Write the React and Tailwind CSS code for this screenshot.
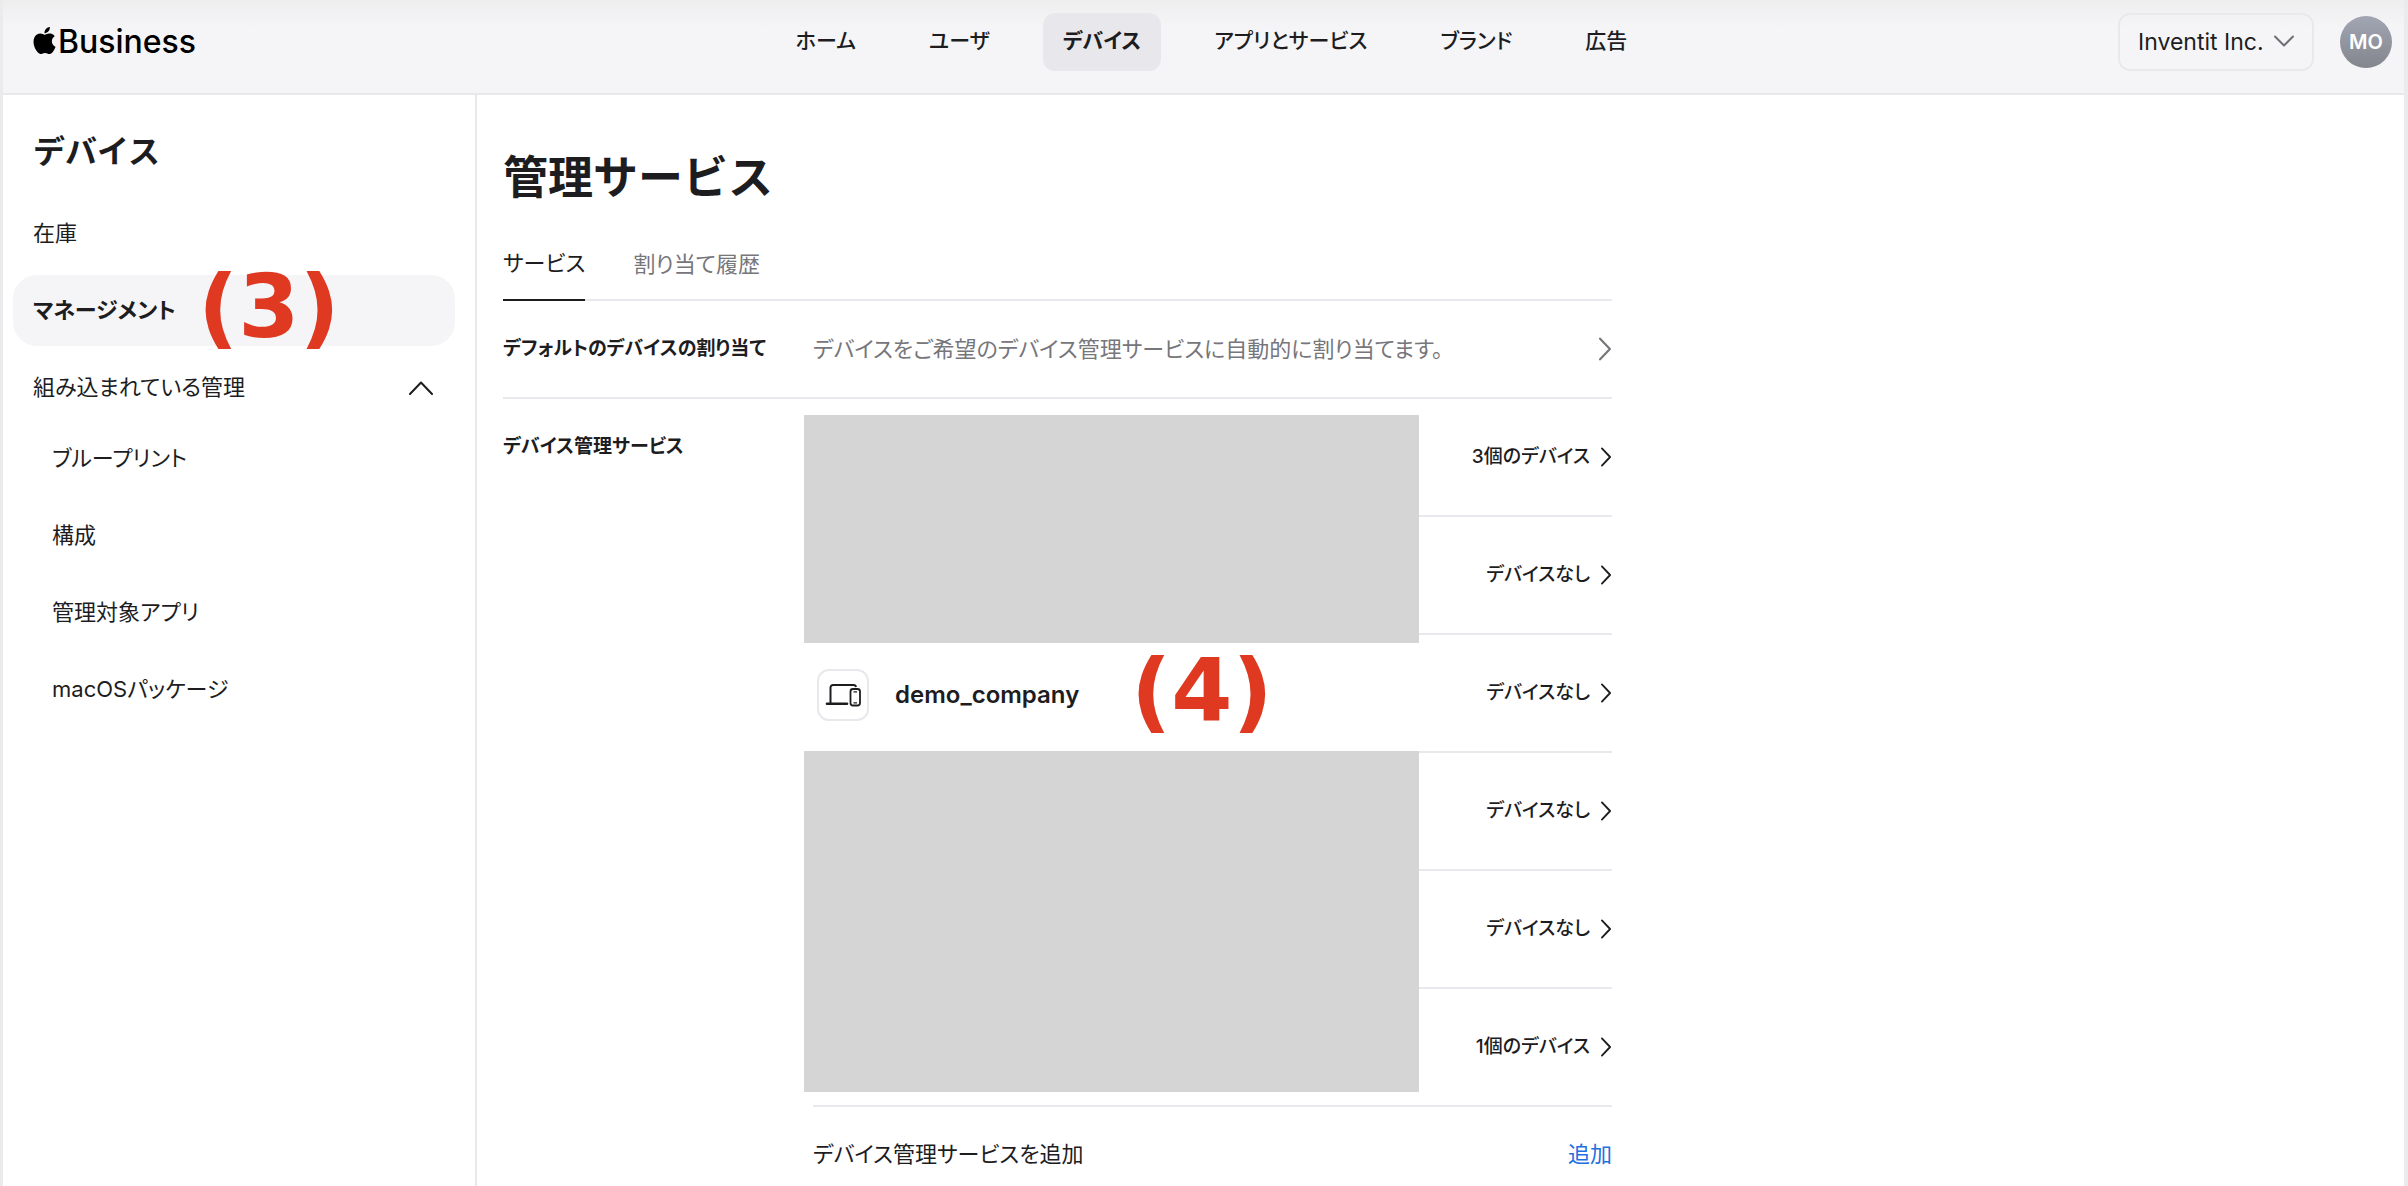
import React from "react";
import { SiApple } from "react-icons/si";
import clsx from "clsx";

const NAV_ITEMS = [
  { id: "home", label: "ホーム" },
  { id: "users", label: "ユーザ" },
  { id: "devices", label: "デバイス", active: true },
  { id: "apps", label: "アプリとサービス" },
  { id: "brand", label: "ブランド" },
  { id: "ads", label: "広告" },
];

const BUILT_IN_ITEMS = [
  { id: "blueprints", label: "ブループリント" },
  { id: "configurations", label: "構成" },
  { id: "managed-apps", label: "管理対象アプリ" },
  { id: "packages", label: "macOSパッケージ" },
];

const SERVICES = [
  { id: 1, count: "3個のデバイス" },
  { id: 2, count: "デバイスなし" },
  { id: 3, name: "demo_company", count: "デバイスなし" },
  { id: 4, count: "デバイスなし" },
  { id: 5, count: "デバイスなし" },
  { id: 6, count: "1個のデバイス" },
];

function Chevron({ className, d = "M1.5 1.5 L10.5 11 L1.5 20.5", box = "0 0 12 22" }) {
  return (
    <svg viewBox={box} className={className} fill="none" aria-hidden="true">
      <path
        d={d}
        stroke="currentColor"
        strokeWidth="2"
        strokeLinecap="round"
        strokeLinejoin="round"
      />
    </svg>
  );
}

function DevicesIcon() {
  return (
    <svg viewBox="0 0 36 24" className="w-9 h-6" fill="none" stroke="currentColor" aria-hidden="true">
      <path d="M5.5 20V4.5a2.5 2.5 0 0 1 2.5-2.5H28.5a2.5 2.5 0 0 1 2.5 2" strokeWidth="2" />
      <path d="M2 20.8H22" strokeWidth="2.6" strokeLinecap="round" />
      <rect x="25.5" y="6" width="9.5" height="16.5" rx="2.5" strokeWidth="1.8" />
      <path d="M28.5 8.8h3.5M28.5 19.8h3.5" strokeWidth="1.2" />
    </svg>
  );
}

// Numbered step marker laid over the screen
function StepMark({ children, className }) {
  return (
    <span
      className={clsx(
        "absolute pointer-events-none font-['DejaVu_Sans',sans-serif] font-bold text-[88px] leading-none text-[#df3922]",
        className
      )}
    >
      {children}
    </span>
  );
}

function Header() {
  return (
    <header className="grid grid-cols-[1fr_auto_1fr] items-start h-[95px] pt-[13px] pl-7 pr-3 border-b-2 border-[#e8e8eb] bg-linear-to-b from-[#eeeeef] to-[#f5f5f7] to-30%">
      <a href="#" className="flex items-center h-[58px] text-black">
        <SiApple className="size-[27px] -mt-1" />
        <span className="text-[32px] font-medium leading-none">Business</span>
      </a>
      <nav className="flex gap-[33px]">
        {NAV_ITEMS.map((item) => (
          <a
            key={item.id}
            href={`#${item.id}`}
            className={clsx(
              "flex items-center h-[58px] px-5 pb-0.5 rounded-xl text-[21px]",
              item.active ? "bg-[#e8e8ec] font-bold" : "font-medium"
            )}
          >
            {item.label}
          </a>
        ))}
      </nav>
      <div className="flex items-center justify-end gap-[26px]">
        <div className="relative">
          <select
            aria-label="組織"
            className="appearance-none h-[58px] pl-[18px] pr-12 rounded-xl border-2 border-[#e9e9ec] text-[23px] bg-transparent"
          >
            <option>Inventit Inc.</option>
          </select>
          <Chevron
            box="0 0 20 12"
            d="M1 1.5 L10 10.5 L19 1.5"
            className="absolute right-5 top-[22px] w-5 h-3 text-[#6e6e73] pointer-events-none"
          />
        </div>
        <button
          type="button"
          className="size-[52px] rounded-full bg-linear-to-b from-[#a2a6b4] to-[#83868c] text-white text-xl font-semibold"
        >
          MO
        </button>
      </div>
    </header>
  );
}

function Sidebar() {
  return (
    <aside className="w-[474px] shrink-0 border-r-2 border-[#e8e8ed] pl-2.5 pr-5 pt-8 text-[22px]">
      <h2 className="px-5 h-[50px] flex items-center text-[32px] font-bold [font-feature-settings:normal]">
        デバイス
      </h2>
      <nav className="flex flex-col gap-1.5 mt-[21px]">
        <a href="#inventory" className="flex items-center h-[71px] px-5">
          在庫
        </a>
        <a
          href="#management"
          className="relative flex items-center h-[71px] px-5 rounded-3xl bg-[#f5f5f7] font-bold"
        >
          マネージメント
          <StepMark className="left-[185px] -top-3">(3)</StepMark>
        </a>
        <div>
          <button
            type="button"
            aria-expanded="true"
            className="flex items-center justify-between w-full h-[71px] pl-5 pr-[22px]"
          >
            組み込まれている管理
            <Chevron box="0 0 24 14" d="M1 13 L12 1.5 L23 13" className="w-6 h-3.5" />
          </button>
          <div className="flex flex-col gap-1.5">
            {BUILT_IN_ITEMS.map((item) => (
              <a key={item.id} href={`#${item.id}`} className="flex items-center h-[71px] pl-[39px]">
                {item.label}
              </a>
            ))}
          </div>
        </div>
      </nav>
    </aside>
  );
}

function ServiceRow({ service }) {
  return (
    <li className="flex items-center h-[118px] border-b-2 border-[#e8e8ed]">
      {service.name && (
        <div className="relative flex items-center ml-1 mt-1">
          <span className="grid place-items-center size-[52px] rounded-xl border-2 border-[#e8e8ed]">
            <DevicesIcon />
          </span>
          <span className="ml-[26px] text-[24px] font-semibold">{service.name}</span>
          <StepMark className="left-[314px] -top-[22px]">(4)</StepMark>
        </div>
      )}
      <button type="button" className="flex items-center gap-2.5 ml-auto text-[19px] font-medium">
        {service.count}
        <Chevron className="w-3 h-5" />
      </button>
    </li>
  );
}

export default function App() {
  return (
    <div className="min-h-screen flex flex-col bg-white text-[#1d1d1f] font-['Inter','Noto_Sans_CJK_JP',sans-serif] [font-feature-settings:'palt'] border-l-3 border-r-4 border-[#ebebed]">
      <Header />
      <div className="flex flex-1">
        <Sidebar />
        <main className="flex-1 pl-[26px] pt-[51px]">
          <div className="max-w-[1109px]">
            <h1 className="text-[45px] leading-[64px] font-bold [font-feature-settings:normal]">
              管理サービス
            </h1>
            <div role="tablist" className="flex gap-12 mt-[17px] text-[22px] border-b-2 border-[#e8e8ed]">
              <button
                type="button"
                role="tab"
                aria-selected="true"
                className="h-[74px] -mb-0.5 border-b-2 border-[#1d1d1f]"
              >
                サービス
              </button>
              <button type="button" role="tab" aria-selected="false" className="h-[74px] -mb-0.5 text-[#76767b]">
                割り当て履歴
              </button>
            </div>

            <section className="grid grid-cols-[310px_1fr] items-center h-[98px] border-b-2 border-[#e8e8ed]">
              <h3 className="text-[19px] font-bold">デフォルトのデバイスの割り当て</h3>
              <button type="button" className="flex items-center justify-between text-[22px] text-[#76767b]">
                デバイスをご希望のデバイス管理サービスに自動的に割り当てます。
                <Chevron className="w-3.5 h-6" />
              </button>
            </section>

            <section className="grid grid-cols-[310px_1fr]">
              <h3 className="mt-[34px] text-[19px] font-bold">デバイス管理サービス</h3>
              <div className="relative">
                <ul>
                  {SERVICES.map((service) => (
                    <ServiceRow key={service.id} service={service} />
                  ))}
                </ul>
                {/* Hidden service names */}
                <div className="absolute -left-[9px] top-4 w-[615px] h-[228px] bg-[#d5d5d5]" />
                <div className="absolute -left-[9px] top-[352px] w-[615px] h-[341px] bg-[#d5d5d5]" />
                <div className="flex items-center justify-between h-[78px] pt-4 text-[22px]">
                  <span>デバイス管理サービスを追加</span>
                  <button type="button" className="text-[#1f6fe0]">
                    追加
                  </button>
                </div>
              </div>
            </section>
          </div>
        </main>
      </div>
    </div>
  );
}
